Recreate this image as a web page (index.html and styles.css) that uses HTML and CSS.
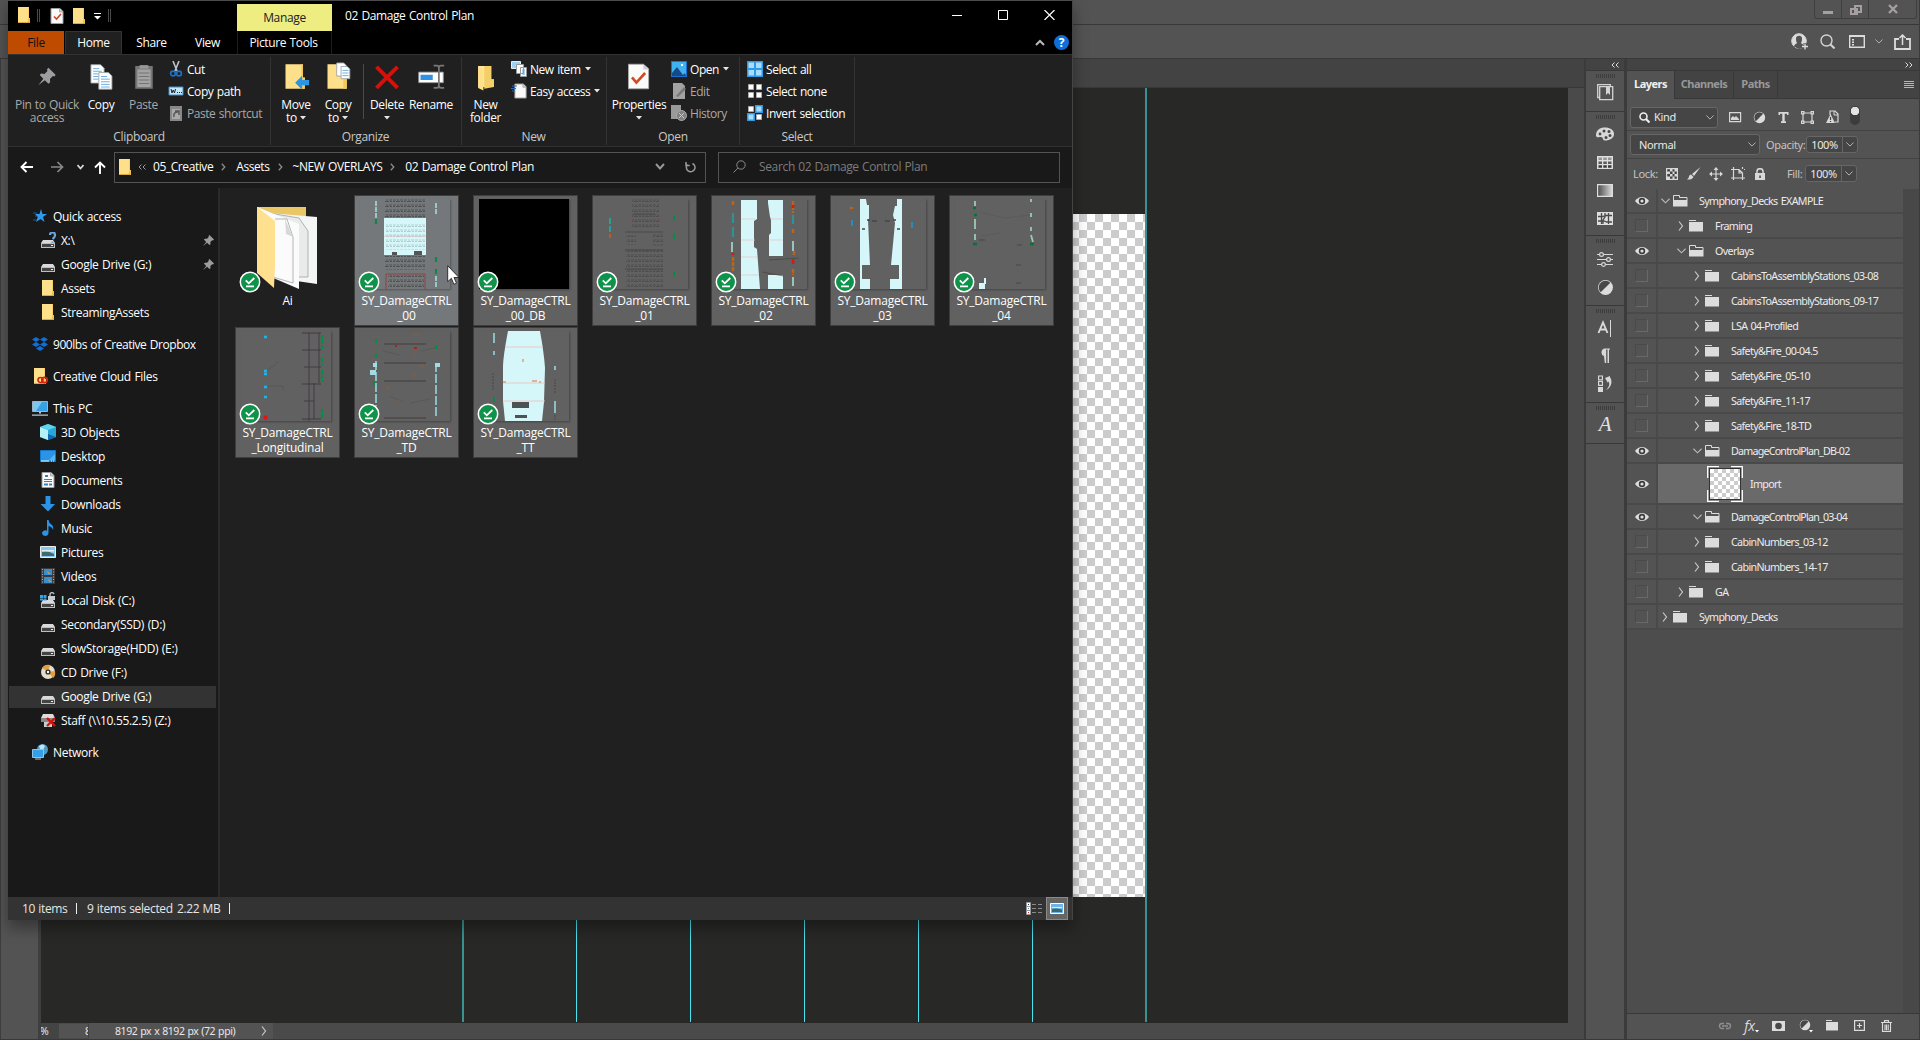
FILE: index.html
```html
<!DOCTYPE html>
<html lang="en">
<head>
<meta charset="utf-8">
<title>02 Damage Control Plan</title>
<link rel="stylesheet" href="styles.css">
</head>
<body>
<svg class="defs" width="0" height="0">
  <symbol id="folder" viewBox="0 0 16 16"><path d="M2 0h11v11h1v4.500H2z" fill="#ffe08a"/><path d="M2 15h12v1H2z" fill="#dca93c"/><path d="M12.500 0v11l-1 4H14V11h-1V0z" fill="#f0c04c"/></symbol>
  <symbol id="drive" viewBox="0 0 16 16"><path d="M3 7h10l2 3H1z" fill="#d9d9d9"/><path d="M1 10h14v5H1z" fill="#bdbdbd"/><path d="M2 11h12v3H2z" fill="#444"/><path d="M11 12h2v1h-2z" fill="#eee"/></symbol>
  <symbol id="pin" viewBox="0 0 12 12"><path d="M7 0l5 5-1 1-1-.3-2 2 .2 2.300L7 11 4.500 8.500 0 12l3.500-4.500L1 5l1-1 2.300.2 2-2L6 1z" fill="#9b9da0"/></symbol>
  <symbol id="doc" viewBox="0 0 16 16"><path d="M2 .5h9l3 3v12H2z" fill="#fafafa" stroke="#9c9c9c"/><path d="M10.500 0v4H14" fill="#ccc" stroke="#999" stroke-width=".7"/></symbol>
  <symbol id="badge" viewBox="0 0 22 22"><circle cx="11" cy="11" r="9.700" fill="#0f934b" stroke="#fff" stroke-width="1.500"/><path d="M6.800 9.300l3 3L15.300 7M7 15.300h8" fill="none" stroke="#fff" stroke-width="1.800"/></symbol>
  <symbol id="down" viewBox="0 0 6 4"><path d="M0 0h6L3 3.500z" fill="#e6e6e6"/></symbol>
  <symbol id="closed" viewBox="0 0 15 12"><path d="M0 0h7v1H0zM0 2h14v9.500H0z" fill="#dcdcdc"/></symbol>
  <symbol id="open" viewBox="0 0 15 12"><path d="M.5 5V.5h6v2h7.500V5" fill="none" stroke="#dcdcdc"/><path d="M0 5h14.500v6.500H0z" fill="#dcdcdc"/></symbol>
  <symbol id="eye" viewBox="0 0 14 10"><path d="M0 5Q3 1 7 1t7 4q-3 4-7 4T0 5z" fill="#dedede"/><circle cx="7" cy="5" r="3.200" fill="#3a3a3a"/><circle cx="7" cy="5" r="1.600" fill="#dedede"/></symbol>
  <symbol id="right" viewBox="0 0 6 10"><path d="M1 .5L4.500 5 1 9.500" fill="none" stroke="#c9c9c9" stroke-width="1.200"/></symbol>
  <symbol id="vee" viewBox="0 0 10 6"><path d="M.5.5L5 5 9.500.5" fill="none" stroke="#b9b9b9" stroke-width="1.200"/></symbol>
  <symbol id="half" viewBox="0 0 16 16"><circle cx="8" cy="8" r="7" fill="#dcdcdc"/><path d="M3.500 12.500A6.300 6.300 0 0 1 12.500 3.500z" fill="#484848"/></symbol>
  <symbol id="crumb" viewBox="0 0 5 8"><path d="M.8.8L3.800 4 .8 7.200" fill="none" stroke="#8d8d8d" stroke-width="1.300"/></symbol>
  <pattern id="ink" width="11" height="5" patternUnits="userSpaceOnUse"><path d="M0 1h3M4 1h2M7 1h3M0 2.500h2M3 2.500h4M8 2.500h2" stroke="#3b3b3b" stroke-width=".9" opacity=".7"/></pattern>
</svg>

<div class="app">
  <header class="app-title">
    <div class="win-buttons">
      <span class="wb"><svg width="10" height="14"><path d="M0 11h10v3H0z" fill="#a59f9f"/></svg></span>
      <span class="wb"><svg width="13" height="16"><path d="M6 6h6v6H6zM2 9h6v5H2z" fill="#535353" stroke="#a59f9f" stroke-width="2"/></svg></span>
      <span class="wb wide"><svg width="10" height="14"><path d="M1 5l8 8M9 5l-8 8" stroke="#a59f9f" stroke-width="2.400"/></svg></span>
    </div>
  </header>
  <div class="options">
    <svg width="17" height="17" viewBox="0 0 17 17"><circle cx="8" cy="8" r="7.300" fill="none" stroke="#dcdcdc"/><path d="M3 13.500q0-2.500 3-3.300Q4.500 8 5 5t3-3 3 3-1 5.200q2 .3 2 1.800v3l-4 1z" fill="#535353"/><path d="M8 1a7 7 0 0 0-5 12q1-2 3-2.800Q4.800 8 5 5.500T8 2.800t3 2.700-1 4.700q2 .6 3 2.800A7 7 0 0 0 8 1z" fill="#dcdcdc"/><path d="M14 10v7M10.500 13.500h7" stroke="#535353" stroke-width="3"/><path d="M14 10.500v6M11 13.500h6" stroke="#ddd" stroke-width="1.300"/></svg>
    <svg class="o-search" width="15" height="15"><circle cx="6.500" cy="6.500" r="5.500" fill="none" stroke="#d4d4d4" stroke-width="1.400"/><path d="M10.500 10.500l4 4" stroke="#d4d4d4" stroke-width="2"/></svg>
    <svg class="o-work" width="16" height="13"><path d="M.7 1h14.600v11.300H.7z" fill="none" stroke="#dcdcdc" stroke-width="1.400"/><path d="M0 0h16v2H0z" fill="#dcdcdc"/><path d="M3 4h2v1.500H3zM3 6.500h2V8H3zM3 9h2v1.500H3z" fill="#dcdcdc"/></svg>
    <svg class="o-vee" width="8" height="5"><use href="#vee"/></svg>
    <svg class="o-share" width="17" height="16"><path d="M5 5H1v10h15V5h-4" fill="none" stroke="#dcdcdc" stroke-width="1.800"/><path d="M8.500 11V1.500M5.500 4l3-3 3 3" fill="none" stroke="#dcdcdc" stroke-width="1.500"/></svg>
  </div>
  <main class="work">
    <aside class="tools"></aside>
    <section class="document">
      <div class="doc-tabs"></div>
      <div class="doc-body">
        <div class="viewport">
          <div class="artboard"></div>
          <i class="guide thick g1"></i><i class="guide g2"></i><i class="guide g3"></i><i class="guide g4"></i><i class="guide g5"></i><i class="guide g6"></i><i class="guide thick g7"></i>
        </div>
        <div class="scroll"></div>
      </div>
      <footer class="doc-status"><span class="pct">%</span><span class="eight">8</span><span class="dims">8192 px x 8192 px (72 ppi)</span><svg class="more" width="6" height="11"><use href="#right"/></svg></footer>
    </section>
    <aside class="dock">
      <div class="dock-top"><span class="laquo"><svg width="8" height="6"><path d="M3.500.5L1 3l2.500 2.500M7.500.5L5 3l2.500 2.500" fill="none" stroke="#ddd"/></svg></span></div>
      <div class="dgroup h1"><i class="grip"></i>
        <svg width="17" height="17"><path d="M3 13.500H.7V.7h12.600V3M2.700 2.700h13v13h-13z" fill="none" stroke="#d4d4d4" stroke-width="1.300"/><path d="M9 3h4v8l-2-2-2 2z" fill="#d4d4d4"/></svg></div>
      <div class="dgroup h2"><i class="grip"></i>
        <svg width="18" height="14"><path d="M9 .5C14 .5 18 3 18 7s-4 6.500-9 6.500c-3 0-1-3-4-3.500C3 10 0 11 0 8.500 0 3 4 .5 9 .5z" fill="#d8d8d8"/><g fill="#494949"><circle cx="4" cy="7" r="1.400"/><circle cx="8" cy="4" r="1.500"/><circle cx="13" cy="4.500" r="1.500"/><circle cx="14" cy="8.500" r="1.500"/><circle cx="10" cy="10.500" r="1.500"/></g></svg>
        <svg width="16" height="13"><path d="M0 0h16v13H0z" fill="#dedede"/><path d="M1.500 1.500h3.500v2.500H1.500zM6.300 1.500h3.500v2.500H6.300zM11 1.500h3.500v2.500H11z" fill="#959595"/><path d="M1.500 5.500h3.500V8H1.500zM6.300 5.500h3.500V8H6.300zM11 5.500h3.500V8H11z" fill="#5b5b5b"/><path d="M1.500 9.300h3.500v2.400H1.500zM6.300 9.300h3.500v2.400H6.300zM11 9.300h3.500v2.400H11z" fill="#383838"/></svg>
        <svg width="16" height="13"><defs><linearGradient id="gr"><stop offset="0" stop-color="#4a4a4a"/><stop offset="1" stop-color="#ddd"/></linearGradient></defs><path d="M.6.6h14.800v11.800H.6z" fill="url(#gr)" stroke="#dedede" stroke-width="1.200"/></svg>
        <svg width="16" height="13"><path d="M0 0h16v13H0z" fill="#dedede"/><path d="M4.500 1v11M8 1v4l-2 3v4M11.500 1v11M1 4.500h5l2-1h7M1 9h6l3 1h5" fill="none" stroke="#494949" stroke-width="1.300"/></svg></div>
      <div class="dgroup h3"><i class="grip"></i>
        <svg width="16" height="15"><path d="M0 2.500h16M0 7.500h16M0 12.500h16" stroke="#d8d8d8" stroke-width="1.200"/><g fill="#535353" stroke="#d8d8d8" stroke-width="1.200"><circle cx="4.500" cy="2.500" r="1.900"/><circle cx="11.500" cy="7.500" r="1.900"/><circle cx="6.500" cy="12.500" r="1.900"/></g></svg>
        <svg width="17" height="17"><use href="#half"/></svg></div>
      <div class="dgroup h4"><i class="grip"></i>
        <svg width="16" height="17"><path d="M1.500 13L6 2.500 10.500 13M3 9.500h6" fill="none" stroke="#dadada" stroke-width="1.900"/><path d="M13.500 0v17" stroke="#dadada"/></svg>
        <svg width="14" height="16"><path d="M6 8a4 4 0 0 1 0-7.500h6v1h-1V15H9.500V1.500h-1.300V15H6.800z" fill="#d8d8d8"/></svg>
        <svg width="16" height="17"><path d="M1.600 1h3.800v3.800H1.600zM1.600 6.500h3.800v3.800H1.600z" fill="none" stroke="#d8d8d8" stroke-width="1.200"/><path d="M1 12h5v5H1zM8 3l5-2v1.500C15 4 16 12 9 15c5-5 3-8 2-8.500V8z" fill="#d8d8d8"/></svg></div>
      <div class="dgroup h5"><i class="grip"></i><span class="glyph">A</span></div>
      <div class="dgroup rest"></div>
    </aside>
    <aside class="panel">
      <div class="panel-top"><svg width="8" height="6"><path d="M.5.5L3 3 .5 5.500M4.500.5L7 3 4.500 5.500" fill="none" stroke="#ddd"/></svg></div>
      <nav class="ptabs"><span class="on">Layers</span><span>Channels</span><span>Paths</span><i class="burger"></i></nav>
      <div class="prow filter">
        <div class="select kind"><svg width="11" height="11"><circle cx="4.500" cy="4.500" r="3.500" fill="none" stroke="#eee" stroke-width="1.600"/><path d="M7 7l3.500 3.500" stroke="#eee" stroke-width="2.200"/></svg><span>Kind</span><svg class="v" width="8" height="5"><use href="#vee"/></svg></div>
        <svg width="13" height="11"><path d="M.6.6h11v9H.6z" fill="none" stroke="#d8d8d8" stroke-width="1.200"/><path d="M2 8V6l2-2 1.500 1.500L7 4l3 3v1z" fill="#d8d8d8"/></svg>
        <svg width="13" height="13"><use href="#half"/></svg>
        <svg width="11" height="11"><path d="M.5 0h10v3H9V1.700H6.700v7.600H8V11H3V9.300h1.300V1.700H2V3H.5z" fill="#d8d8d8"/></svg>
        <svg width="13" height="13"><path d="M2 2h9v9H2z" fill="none" stroke="#d8d8d8" stroke-width="1.200"/><path d="M0 0h3.500v3.500H0zM9.500 0H13v3.500H9.500zM0 9.500h3.500V13H0zM9.500 9.500H13V13H9.500z" fill="#d8d8d8"/><path d="M1.200 1.200h1v1h-1zM10.700 1.200h1v1h-1zM1.200 10.700h1v1h-1zM10.700 10.700h1v1h-1z" fill="#444"/></svg>
        <svg width="13" height="14"><path d="M4 5V1h5l3 3v8H9" fill="none" stroke="#d8d8d8" stroke-width="1.200"/><path d="M8 1v4h4" fill="none" stroke="#d8d8d8"/><path d="M4.500 4L9 13H0z" fill="#d8d8d8"/><path d="M4.500 7v3M4.500 11v1" stroke="#444" stroke-width="1.200"/></svg>
        <i class="toggle"></i>
      </div>
      <div class="prow blend"><div class="select mode"><span>Normal</span><svg class="v" width="8" height="5"><use href="#vee"/></svg></div><span class="lab">Opacity:</span><div class="num"><b>100%</b><i><svg width="8" height="5"><use href="#vee"/></svg></i></div></div>
      <div class="prow lock"><span class="lab">Lock:</span>
        <svg class="l1" width="12" height="12"><path d="M.6.6h10.800v10.800H.6z" fill="#444" stroke="#d8d8d8" stroke-width="1.200"/><path d="M4 1h2.500v2.500H4zM8.500 1H11v2.500H8.500zM1 3.500h3V6H1zM6.500 3.500h2V6h-2zM4 6h2.500v2.500H4zM8.500 6H11v2.500H8.500zM1 8.500h3V11H1zM6.500 8.500h2V11h-2z" fill="#d8d8d8"/></svg>
        <svg width="14" height="13"><path d="M13.500 0L7 9 5 7zM4 7.500L6.500 10Q5 13 0 12.500 2 11 2 9.500T4 7.500z" fill="#d8d8d8"/></svg>
        <svg width="14" height="14"><path d="M7 1v12M1 7h12" stroke="#d8d8d8" stroke-width="1.200"/><path d="M7 0l2.500 3h-5zM7 14l2.500-3h-5zM0 7l3-2.500v5zM14 7l-3-2.500v5z" fill="#d8d8d8"/></svg>
        <svg width="14" height="13"><path d="M2.500 0v13M0 2.500h8l3.500 3.500v7M0 11h14M8 3v3h3M11.500 0v2M13 2.500h1" fill="none" stroke="#d8d8d8" stroke-width="1.200"/></svg>
        <svg class="l5" width="10" height="12"><path d="M0 5h10v7H0z" fill="#d8d8d8"/><path d="M2 5V3.500a3 2.800 0 0 1 6 0V5" fill="none" stroke="#d8d8d8" stroke-width="1.500"/><path d="M4.300 7.500h1.500V10H4.300z" fill="#444"/></svg>
        <span class="lab fill">Fill:</span><div class="num"><b>100%</b><i><svg width="8" height="5"><use href="#vee"/></svg></i></div></div>
      <div class="list">
        <div class="layer"><span class="vis"><svg><use href="#eye"/></svg></span><svg class="tv"><use href="#vee"/></svg><svg class="fo"><use href="#open"/></svg><span>Symphony_Decks EXAMPLE</span></div>
        <div class="layer d1"><span class="vis"><i></i></span><svg class="tr"><use href="#right"/></svg><svg class="fo"><use href="#closed"/></svg><span>Framing</span></div>
        <div class="layer d1"><span class="vis"><svg><use href="#eye"/></svg></span><svg class="tv"><use href="#vee"/></svg><svg class="fo"><use href="#open"/></svg><span>Overlays</span></div>
        <div class="layer d2"><span class="vis"><i></i></span><svg class="tr"><use href="#right"/></svg><svg class="fo"><use href="#closed"/></svg><span>CabinsToAssemblyStations_03-08</span></div>
        <div class="layer d2"><span class="vis"><i></i></span><svg class="tr"><use href="#right"/></svg><svg class="fo"><use href="#closed"/></svg><span>CabinsToAssemblyStations_09-17</span></div>
        <div class="layer d2"><span class="vis"><i></i></span><svg class="tr"><use href="#right"/></svg><svg class="fo"><use href="#closed"/></svg><span>LSA 04-Profiled</span></div>
        <div class="layer d2"><span class="vis"><i></i></span><svg class="tr"><use href="#right"/></svg><svg class="fo"><use href="#closed"/></svg><span>Safety&amp;Fire_00-04.5</span></div>
        <div class="layer d2"><span class="vis"><i></i></span><svg class="tr"><use href="#right"/></svg><svg class="fo"><use href="#closed"/></svg><span>Safety&amp;Fire_05-10</span></div>
        <div class="layer d2"><span class="vis"><i></i></span><svg class="tr"><use href="#right"/></svg><svg class="fo"><use href="#closed"/></svg><span>Safety&amp;Fire_11-17</span></div>
        <div class="layer d2"><span class="vis"><i></i></span><svg class="tr"><use href="#right"/></svg><svg class="fo"><use href="#closed"/></svg><span>Safety&amp;Fire_18-TD</span></div>
        <div class="layer d2 tight"><span class="vis"><svg><use href="#eye"/></svg></span><svg class="tv"><use href="#vee"/></svg><svg class="fo"><use href="#open"/></svg><span>DamageControlPlan_DB-02</span></div>
        <div class="layer sel"><span class="vis"><svg><use href="#eye"/></svg></span><div class="lthumb"><i></i><svg width="36" height="36"><path d="M.7 12V.7H12M24 .7h11.300V12M35.300 24v11.300H24M12 35.300H.7V24" fill="none" stroke="#fff" stroke-width="1.300"/></svg></div><span>Import</span></div>
        <div class="layer d2 tight"><span class="vis"><svg><use href="#eye"/></svg></span><svg class="tv"><use href="#vee"/></svg><svg class="fo"><use href="#open"/></svg><span>DamageControlPlan_03-04</span></div>
        <div class="layer d2"><span class="vis"><i></i></span><svg class="tr"><use href="#right"/></svg><svg class="fo"><use href="#closed"/></svg><span>CabinNumbers_03-12</span></div>
        <div class="layer d2"><span class="vis"><i></i></span><svg class="tr"><use href="#right"/></svg><svg class="fo"><use href="#closed"/></svg><span>CabinNumbers_14-17</span></div>
        <div class="layer d1"><span class="vis"><i></i></span><svg class="tr"><use href="#right"/></svg><svg class="fo"><use href="#closed"/></svg><span>GA</span></div>
        <div class="layer"><span class="vis"><i></i></span><svg class="tr"><use href="#right"/></svg><svg class="fo"><use href="#closed"/></svg><span>Symphony_Decks</span></div>
      </div>
      <footer class="pfoot">
        <svg width="14" height="8"><path d="M6 1.500H4a2.500 2.500 0 0 0 0 5h2M8 1.500h2a2.500 2.500 0 0 1 0 5H8M4 4h6" fill="none" stroke="#8e8e8e" stroke-width="1.400"/></svg>
        <span class="fx">fx<svg width="4" height="3"><path d="M0 0h4L2 2.500z" fill="#fff"/></svg></span>
        <svg width="13" height="10"><path d="M0 0h13v10H0z" fill="#dcdcdc"/><circle cx="6.500" cy="5" r="3.300" fill="#484848"/></svg>
        <svg width="14" height="14"><use href="#half" width="12" height="12"/><path d="M10 11h4l-2 2.500z" fill="#fff"/></svg>
        <svg width="13" height="11"><path d="M0 0h6v1H0zM0 2h12v8.500H0z" fill="#dcdcdc"/></svg>
        <svg width="11" height="11"><path d="M.6.6h9.800v9.800H.6zM5.500 3v5M3 5.500h5" fill="none" stroke="#dcdcdc" stroke-width="1.200"/></svg>
        <svg width="11" height="12"><path d="M0 2.500h11M3.500 2V.6h4V2M1.500 3v8.400h8V3M4 4.500v5.500M5.500 4.500v5.500M7.200 4.500v5.500" fill="none" stroke="#dcdcdc" stroke-width="1.100"/></svg>
      </footer>
    </aside>
  </main>
</div>

<div class="explorer">
  <header class="x-title">
    <svg class="q1" width="15" height="16"><use href="#folder" x="-1" width="16" height="16"/></svg><i class="qsep"></i>
    <svg class="q2" width="16" height="17"><use href="#doc" width="16" height="16"/><path d="M5 8.500l2.500 2.500L12 6" fill="none" stroke="#d2451e" stroke-width="1.600"/></svg>
    <svg class="q3" width="15" height="16"><use href="#folder" x="-1" width="16" height="16"/></svg>
    <svg class="q4" width="7" height="7"><path d="M0 0h7v1H0zM0 3h7L3.500 6.500z" fill="#fff"/></svg><i class="qsep"></i>
    <div class="manage">Manage</div><div class="x-name">02 Damage Control Plan</div>
    <div class="x-ctl"><svg width="10" height="10"><path d="M0 5.500h10" stroke="#fff"/></svg><svg width="10" height="10"><path d="M.5.5h9v9h-9z" fill="none" stroke="#fff"/></svg><svg width="11" height="10"><path d="M.5 0l10 10M10.500 0L.5 10" stroke="#fff" stroke-width="1.200"/></svg></div>
  </header>
  <nav class="x-tabs"><span class="file">File</span><span class="home">Home</span><span class="share">Share</span><span class="view">View</span><span class="pict">Picture Tools</span><div class="x-help"><svg width="10" height="7"><path d="M1 6l4-4 4 4" fill="none" stroke="#bbb" stroke-width="2"/></svg><b>?</b></div></nav>
  <section class="ribbon">
    <div class="grp clip"><div class="gb">
      <div class="big dim w66"><svg class="i32" viewBox="0 0 32 32"><use href="#pin" x="6" y="6" width="20" height="20"/></svg><span>Pin to Quick<br>access</span></div>
      <div class="big w42"><svg class="i32" viewBox="0 0 32 32"><g fill="#fff" stroke="#9aa3a8"><path d="M4.500 2.500h11l4 4v17h-15z"/><path d="M13.500 11.500h11l4 4v15h-15z"/></g><path d="M7 7h7M7 10h10M7 13h6M7 16h6M7 19h6M16 16h7M16 19h10M16 22h10M16 25h10M16 28h10" stroke="#5ba4dc"/></svg><span>Copy</span></div>
      <div class="big dim w43"><svg class="i32" viewBox="0 0 32 32"><path d="M6 4h20v26H6z" fill="#777"/><path d="M8.500 8h15v20h-15z" fill="#a4a4a4"/><path d="M11 3h10v4H11z" fill="#999"/><path d="M10 12h12M10 16h12M10 20h12M10 24h12" stroke="#6b6b6b"/></svg><span>Paste</span></div>
      <div class="small s1">
        <div><svg viewBox="0 0 16 16"><path d="M5 0l4 10M11 0L7 10" stroke="#b8c4cf" stroke-width="1.600"/><circle cx="5" cy="12.500" r="2.400" fill="none" stroke="#1f6fc4" stroke-width="1.700"/><circle cx="11" cy="12.500" r="2.400" fill="none" stroke="#1f6fc4" stroke-width="1.700"/></svg>Cut</div>
        <div><svg viewBox="0 0 16 16"><path d="M1 4h14v8H1z" fill="#c5e7f8" stroke="#3f8fc2"/><path d="M3 6l1 4 1.200-3L6.500 10l1-4M9 9.500h1M11 9.500h1M13 9.500h1" fill="none" stroke="#222"/></svg>Copy path</div>
        <div class="dim"><svg viewBox="0 0 16 16"><path d="M2 1h12v15H2z" fill="#888"/><path d="M4 4h8v10H4z" fill="#aaa"/><path d="M6 12q-1-5 4-5M7 6h4v4" fill="none" stroke="#555" stroke-width="1.500"/></svg>Paste shortcut</div>
      </div></div><p>Clipboard</p></div>
    <div class="grp orga"><div class="gb">
      <div class="big w42"><svg class="i32" viewBox="0 0 32 32"><path d="M4 2h20v15h2v13H4z" fill="#ffe08a"/><path d="M22 2h2v15h2v13h-4z" fill="#f3c95c"/><path d="M31 20h-8v-5l-8 8 8 8v-5h8z" fill="#2c94e4"/></svg><span>Move<br>to <svg class="dn"><use href="#down"/></svg></span></div>
      <div class="big w42"><svg class="i32" viewBox="0 0 32 32"><path d="M4 2h20v15h2v13H4z" fill="#ffe08a"/><path d="M22 16h4v14h-4z" fill="#f3c95c"/><g fill="#fff" stroke="#9aa3a8"><path d="M14.500.5h8l3 3v12h-11z"/><path d="M19.500 4.500h7l3 3v11h-10z"/></g><path d="M21 9h7M21 12h7M21 15h7" stroke="#5ba4dc"/></svg><span>Copy<br>to <svg class="dn"><use href="#down"/></svg></span></div>
      <i class="vr"></i>
      <div class="big w46"><svg class="i32" viewBox="0 0 32 32"><path d="M4 5l24 24M28 5L4 29" stroke="#d8100c" stroke-width="4.400"/></svg><span>Delete<br><svg class="dn"><use href="#down"/></svg></span></div>
      <div class="big w42"><svg class="i32" viewBox="0 0 32 32"><path d="M2 11h28v12H2z" fill="#fff" stroke="#999"/><path d="M4 14h14v6H4z" fill="#2f92e2"/><path d="M19 3.500h3.500q2.500 0 2.500 2.500v20q0 3-2.500 3H19M31 3.500h-3.500Q25 3.500 25 6M31 29h-3.500Q25 29 25 26" fill="none" stroke="#777" stroke-width="2"/></svg><span>Rename</span></div>
    </div><p>Organize</p></div>
    <div class="grp newg"><div class="gb">
      <div class="big w39"><svg class="i32" viewBox="0 0 32 32"><path d="M7 4h15v15h3v9H7z" fill="#ffe79c"/><path d="M14 4h8v15h3v9l-11 2z" fill="#f4cf68"/><path d="M7 4l6 3v25l-6-3z" fill="#ffe08a"/></svg><span>New<br>folder</span></div>
      <div class="small s2">
        <div><svg viewBox="0 0 16 16"><path d="M.5.5h9v7h-9z" fill="#9cd3f3" stroke="#eee"/><path d="M5.500 3.500h7v9h-7zM9.500 6.500h6v9h-6z" fill="#fff" stroke="#999"/><path d="M11 9h3M11 11h3M11 13h3" stroke="#5ba4dc"/></svg>New item<svg class="dn"><use href="#down"/></svg></div>
        <div><svg viewBox="0 0 16 16"><use href="#doc" x="2" width="15" height="16"/><path d="M1 3h5M0 5.500h5M1 8h3" stroke="#2b6cc0"/></svg>Easy access<svg class="dn"><use href="#down"/></svg></div>
      </div></div><p>New</p></div>
    <div class="grp open"><div class="gb">
      <div class="big w52"><svg class="i32" viewBox="0 0 32 32"><path d="M4 2h17l6 5v23H4z" fill="#fafafa" stroke="#aaa"/><path d="M21 2v6h6" fill="#ccc"/><path d="M8 17l5 6 10-11" fill="none" stroke="#cf4a20" stroke-width="3"/></svg><span>Properties<br><svg class="dn"><use href="#down"/></svg></span></div>
      <div class="small s3">
        <div><svg viewBox="0 0 16 16"><path d="M0 0h16v16H0z" fill="#1a6fd0"/><path d="M1 1h14v14H1z" fill="#41b2f0"/><path d="M1 12l5-6 6 8 2-2 1 3H1z" fill="#164a86"/><path d="M10 3h2v2h-2z" fill="#fff"/></svg>Open<svg class="dn"><use href="#down"/></svg></div>
        <div class="dim"><svg viewBox="0 0 16 16"><path d="M2 0h9l3 3v13H2z" fill="#a2a2a2"/><path d="M5 13l8-9 2 2-8 8z" fill="#777"/></svg>Edit</div>
        <div class="dim"><svg viewBox="0 0 16 16"><path d="M0 0h10v14H0z" fill="#999"/><circle cx="10.500" cy="10.500" r="5" fill="#808080" stroke="#aaa"/><path d="M8 8l5 5M13 8l-5 5" stroke="#ccc"/></svg>History</div>
      </div></div><p>Open</p></div>
    <div class="grp selg"><div class="gb">
      <div class="small s4">
        <div><svg viewBox="0 0 16 16"><path d="M0 0h16v16H0z" fill="#2e9be8"/><path d="M1.500 1.500h5.500V7H1.500zM9 1.500h5.500V7H9zM1.500 9h5.500v5.500H1.500zM9 9h5.500v5.500H9z" fill="#a9dcfa"/></svg>Select all</div>
        <div><svg viewBox="0 0 16 16"><path d="M1.500 1.500h5v5h-5zM9.500 1.500h5v5h-5zM1.500 9.500h5v5h-5zM9.500 9.500h5v5h-5z" fill="#fff" stroke="#aaa"/></svg>Select none</div>
        <div><svg viewBox="0 0 16 16"><path d="M1.500 1.500h5v5h-5zM9.500 9.500h5v5h-5z" fill="#fff" stroke="#aaa"/><path d="M8.700.7h6.500v6.500H8.700zM.7 8.700h6.500v6.500H.7z" fill="#a9dcfa" stroke="#2e9be8" stroke-width="1.500"/></svg>Invert selection</div>
      </div></div><p>Select</p></div>
  </section>
  <section class="addr">
    <svg class="a1" width="13" height="12"><path d="M13 6H1.500M6.500 1l-5 5 5 5" fill="none" stroke="#fff" stroke-width="1.900"/></svg>
    <svg class="a2" width="13" height="12"><path d="M0 6h11.500M6.500 1l5 5-5 5" fill="none" stroke="#8a8a8a" stroke-width="1.700"/></svg>
    <svg class="a3" width="7" height="6"><path d="M.5 1l3 3.500 3-3.500" fill="none" stroke="#ddd" stroke-width="1.700"/></svg>
    <svg class="a4" width="12" height="13"><path d="M6 13V1.500M1 6.500l5-5 5 5" fill="none" stroke="#fff" stroke-width="1.900"/></svg>
    <div class="path"><svg class="pf" width="15" height="16"><use href="#folder" x="-1" width="16" height="16"/></svg><svg class="ll" width="8" height="6"><path d="M3.500.5L1 3l2.500 2.500M7.500.5L5 3l2.500 2.500" fill="none" stroke="#999"/></svg><span class="c1">05_Creative</span><svg class="cr"><use href="#crumb"/></svg><span class="c2">Assets</span><svg class="cr"><use href="#crumb"/></svg><span class="c3">~NEW OVERLAYS</span><svg class="cr"><use href="#crumb"/></svg><span class="c4">02 Damage Control Plan</span>
      <svg class="pv" width="10" height="7"><path d="M1 1l4 4.500L9 1" fill="none" stroke="#999" stroke-width="1.900"/></svg><svg class="pr" width="11" height="12"><path d="M7.500 2.500A4.300 4.300 0 1 1 2.500 3.500M1 1v3.500h3.700" fill="none" stroke="#9a9a9a" stroke-width="1.500"/></svg></div>
    <div class="find"><svg width="13" height="13"><circle cx="8" cy="5" r="4.200" fill="none" stroke="#8a8a8a"/><path d="M5 8l-4.500 4.500" stroke="#8a8a8a"/></svg><span>Search 02 Damage Control Plan</span></div>
  </section>
  <div class="x-main">
    <aside class="side">
      <div class="it"><svg viewBox="0 0 16 16"><path d="M9 1l1.500 5H15l-4 3 1.500 5-4-3-4.500 3 1.800-5L3 6h4.500z" fill="#2d9cf0"/><path d="M1 5h4M3 8h2M1 12h4" stroke="#1c5a9a"/></svg>Quick access</div>
      <div class="it c"><svg viewBox="0 0 16 16"><use href="#drive" y="1"/><path d="M10 3q0-2.500 2.500-2.500T15 3t-2.500 4M12.500 9.500v1.500" fill="none" stroke="#6ea4d8" stroke-width="2.200"/></svg>X:\<svg class="pn"><use href="#pin"/></svg></div>
      <div class="it c"><svg viewBox="0 0 16 16"><use href="#drive" y="1"/></svg>Google Drive (G:)<svg class="pn"><use href="#pin"/></svg></div>
      <div class="it c"><svg viewBox="0 0 16 16"><use href="#folder"/></svg>Assets</div>
      <div class="it c"><svg viewBox="0 0 16 16"><use href="#folder"/></svg>StreamingAssets</div>
      <div class="it g long"><svg viewBox="0 0 16 16"><path d="M4 1l4 2.500L4 6 0 3.500zM12 1l4 2.500L12 6 8 3.500zM4 6l4 2.500L4 11 0 8.500zM12 6l4 2.500-4 2.500-4-2.500zM8 10l4 2.500L8 15l-4-2.500z" fill="#0f6fd8"/></svg>900lbs of Creative Dropbox</div>
      <div class="it g"><svg viewBox="0 0 16 16"><use href="#folder"/><circle cx="8.500" cy="12" r="2.500" fill="none" stroke="#d3230e" stroke-width="1.700"/><circle cx="12.500" cy="12" r="2.700" fill="none" stroke="#d3230e" stroke-width="1.700"/></svg>Creative Cloud Files</div>
      <div class="it g"><svg viewBox="0 0 16 16"><path d="M.5 1.500h15v10H.5z" fill="#38a0e4" stroke="#9fb4c4"/><path d="M1 2h9l-6 9H1z" fill="#7cc6f2"/><path d="M7 12h2v1.500H7zM0 14.500h16v1.200H0z" fill="#b8c4cc"/></svg>This PC</div>
      <div class="it c"><svg viewBox="0 0 16 16"><path d="M8 0l8 3v10l-8 3-8-3V3z" fill="#29a8d8"/><path d="M0 3l8 3v10l-8-3z" fill="#b4f0fa"/><path d="M8 0l8 3-8 3-8-3z" fill="#5fd4f0"/><path d="M8 10l8 3-8 3z" fill="#1169b4"/></svg>3D Objects</div>
      <div class="it c"><svg viewBox="0 0 16 16"><path d="M.5 2.500h15v11H.5z" fill="#2a94e6" stroke="#1378c8"/><path d="M9 12l6-6v6z" fill="#56b6f4"/><path d="M1 13h8M11 13h1M13 13h1" stroke="#dff"/></svg>Desktop</div>
      <div class="it c"><svg viewBox="0 0 16 16"><use href="#doc"/><path d="M5 3h3v2H5zM4 7h8v1H4zM4 9h8v1H4zM4 11.500h4v2H4zM9 11.500h3v2H9z" fill="#2c84c8"/></svg>Documents</div>
      <div class="it c"><svg viewBox="0 0 16 16"><path d="M5.500 0h5v8H15l-7 7.500L.5 8h5z" fill="#2b93e6"/></svg>Downloads</div>
      <div class="it c"><svg viewBox="0 0 16 16"><path d="M7 0h1.500q.5 3 3 4.500T13 10q-.5-3-4.500-4v7a3.200 2.800 0 1 1-1.500-2.300z" fill="#2b93e6"/></svg>Music</div>
      <div class="it c"><svg viewBox="0 0 16 16"><path d="M.5 2.500h15v11H.5z" fill="#8cc8ec" stroke="#eee"/><path d="M2 8q5-2 12 2v2H2z" fill="#3f6a6e"/><path d="M2 6h12v1.500H2z" fill="#dff0f8"/></svg>Pictures</div>
      <div class="it c"><svg viewBox="0 0 16 16"><path d="M1 0h14v16H1z" fill="#3a3a3a"/><path d="M4 1h8v6H4zM4 9h8v6H4z" fill="#3b8ecc"/><path d="M7 3l4 3H8zM8 11l4 3H9z" fill="#dc9038"/><path d="M2.500 1v14M13.500 1v14" stroke="#aaa" stroke-width="1.200" stroke-dasharray="1 1.500"/></svg>Videos</div>
      <div class="it c"><svg viewBox="0 0 16 16"><use href="#drive" y="1"/><path d="M0 3h3v3H0zM3.500 3h3v3h-3zM0 6.500h3v2H0zM3.500 6.500h3v2h-3z" fill="#2fa4ea"/><path d="M8 4h7v4H8z" fill="#c4ccd2"/><path d="M10 4V2q2-3 4 0" fill="none" stroke="#bbb" stroke-width="1.400"/></svg>Local Disk (C:)</div>
      <div class="it c"><svg viewBox="0 0 16 16"><use href="#drive" y="1"/></svg>Secondary(SSD) (D:)</div>
      <div class="it c"><svg viewBox="0 0 16 16"><use href="#drive" y="1"/></svg>SlowStorage(HDD) (E:)</div>
      <div class="it c"><svg viewBox="0 0 16 16"><circle cx="8" cy="8" r="7" fill="#e6dccb"/><path d="M8 8L2 4q3-4 8-3zM8 8l5 6q3-2 2-7z" fill="#e0a040"/><circle cx="8" cy="8" r="2.600" fill="#2a2a2a"/><circle cx="8" cy="8" r="1.200" fill="#fff"/></svg>CD Drive (F:)</div>
      <div class="it c cur"><svg viewBox="0 0 16 16"><use href="#drive" y="1"/></svg>Google Drive (G:)</div>
      <div class="it c"><svg viewBox="0 0 16 16"><path d="M3 2h10l2 4H1z" fill="#ddd"/><path d="M1 6h14v4H1z" fill="#888"/><path d="M4 10h8v5H4z" fill="#ccc"/><path d="M7 6l8 8M15 6l-8 8" stroke="#d8100c" stroke-width="2.400"/></svg>Staff (\\10.55.2.5) (Z:)</div>
      <div class="it g"><svg viewBox="0 0 16 16"><circle cx="10.500" cy="5.500" r="5.500" fill="#4d9cc4"/><path d="M7 2q4-3 6 0l-2 4-3-1z" fill="#bfe4f2"/><path d="M.5 5.500h11v8H.5z" fill="#35a0ea" stroke="#8cc4ea"/><path d="M3 15h6" stroke="#bbb"/></svg>Network</div>
    </aside>
    <section class="files">
      <div class="tile plain"><div class="th"><svg viewBox="0 0 90 90"><path d="M16 8h49v52H16z" fill="#e9c767"/><path d="M28 14l48 4v67L28 78z" fill="#f4f5f5"/><path d="M28 14l30 5 9 13v46H28z" fill="#e9ebeb" stroke="#888" stroke-width=".6"/><path d="M16 8l42 17v65L30 78z" fill="#fbfbfb"/><path d="M34 20h12l6 18v46l-20-6" fill="none" stroke="#888" stroke-width=".6"/><path d="M44 20l8 18-7-3z" fill="#d7d9d9"/><path d="M16 8l18 14v44l-1 23-17-15z" fill="#ffe08f"/></svg></div><svg class="bd"><use href="#badge"/></svg><p>Ai</p></div>
      <div class="tile hot"><div class="th"><svg viewBox="0 0 90 90"><path fill="url(#ink)" d="M25 0h41v18H25zM25 57h41v14H25zM28 76h36v13H28z"/><path d="M24 19h42v37H24z" fill="#d5f7fa"/><path fill="url(#ink)" opacity=".35" d="M26 23h39v28H26z"/><path d="M24 37h42" stroke="#efb9bd" stroke-width=".8"/><path d="M32 53h5v3h-5zM54 52h8v4h-8z" fill="#555"/><path d="M26 90V75h39v15" fill="none" stroke="#8b4545"/><path d="M16 2v17M76 4v11M76 77v12" stroke="#a2dbdc" stroke-width="1.600" stroke-dasharray="5 1"/><path d="M16 20v5M76 58v5M76 70v5" stroke="#078b45" stroke-width="2.200"/></svg></div><svg class="bd"><use href="#badge"/></svg><p>SY_DamageCTRL<br>_00</p></div>
      <div class="tile"><div class="th black"></div><svg class="bd"><use href="#badge"/></svg><p>SY_DamageCTRL<br>_00_DB</p></div>
      <div class="tile"><div class="th"><svg viewBox="0 0 90 90"><path fill="url(#ink)" opacity=".8" d="M34 0h27v30H34zM28 36h10v10H28zM54 35h12v12H54zM28 50h38v40H28z"/><path d="M27 33h38M27 51h38M27 70h38M35 15h22" stroke="#444" stroke-width=".8"/><path d="M12 19v15" stroke="#2a9f98" stroke-width="2" stroke-dasharray="6 2"/><path d="M12 35v4" stroke="#b85d21" stroke-width="2"/><path d="M76 17v4M76 35v5M76 73v4" stroke="#078b45" stroke-width="2"/><path d="M34 22h2M61 21h2" stroke="#b33"/></svg></div><svg class="bd"><use href="#badge"/></svg><p>SY_DamageCTRL<br>_01</p></div>
      <div class="tile"><div class="th"><svg viewBox="0 0 90 90"><path d="M24 1h16v19l-3 2v26l3 2 3 40H24zM51 1h15v56H52V36l2-2V20l-1-2-2-14zM51 76h15v14H51z" fill="#d5f7fa"/><path d="M24 20h14M53 20h13M24 41h14M53 41h13M24 58h16M24 76h18" stroke="#f1bcbc" stroke-width=".7"/><path d="M16 2v4M16 58v15M76 2v12M76 30v5M77 52v5M76 70v6" stroke="#bd6416" stroke-width="2.400" stroke-dasharray="4 1"/><path d="M16 14v26M76 16v9" stroke="#2c9294" stroke-width="2.200" stroke-dasharray="10 4"/><path d="M15 43v10M76 42v10M76 78v9" stroke="#9bc4b9" stroke-width="2"/><path d="M16 54v2M76 60v5M76 6v3" stroke="#e01616" stroke-width="2.600"/><path d="M45 73l22 4M52 61l30-2" stroke="#454545" stroke-width=".7"/></svg></div><svg class="bd"><use href="#badge"/></svg><p>SY_DamageCTRL<br>_02</p></div>
      <div class="tile"><div class="th"><svg viewBox="0 0 90 90"><path d="M24 0h6l1 6h2v14h-1l2 46h-8v14h8v10H24zM61 0h5v90H54V80h9V66h-8l4-42-2-8 2-9h2z" fill="#d5f7fa"/><path d="M31 21h3M57 21h3M26 30h3M61 30h3M36 22h5M49 22h5" stroke="#454545" stroke-width="1.500"/><path d="M16 21v6M76 23v6" stroke="#2491c9" stroke-width="1.800"/><path d="M14 9h3" stroke="#ba641c" stroke-width="2"/></svg></div><svg class="bd"><use href="#badge"/></svg><p>SY_DamageCTRL<br>_03</p></div>
      <div class="tile"><div class="th"><svg viewBox="0 0 90 90"><path d="M20 2v5M20 20v10M20 35v6M76 0v3M76 14v4M76 28v4M76 36l2 7" stroke="#9bc9b9" stroke-width="1.800"/><path d="M18 9h3M19 16h3M18 45h4M75 45h4" stroke="#08713a" stroke-width="2.400"/><path d="M24 84h6v6h-6zM29 79h2v6h-2z" fill="#d5f7fa"/><path d="M24 41h6M62 46h5M61 66h5M61 84h5" stroke="#484848"/><path d="M25 13l25 6 25-3M25 37l20-3" stroke="#585858" stroke-width=".6" fill="none"/></svg></div><svg class="bd"><use href="#badge"/></svg><p>SY_DamageCTRL<br>_04</p></div>
      <div class="tile"><div class="th"><svg viewBox="0 0 90 90"><path d="M68 2v88M78 2v50M73 52v36M61 2h19M61 19h19M63 36h17M61 53h19M63 70h10M61 88h19" stroke="#423b40" fill="none"/><path d="M81 4v14M81 27v8M81 39v12M81 78v9" stroke="#078b45" stroke-width="2.200" stroke-dasharray="4 1"/><path d="M23 6h3M23 40h3M23 43h3M23 56h3M23 66h3" stroke="#18b6e9" stroke-width="2.600"/><circle cx="24.500" cy="86.500" r="2.200" fill="#e01616"/><path d="M26 40l12-10M27 55h15v5" stroke="#505050" stroke-width=".6" fill="none"/></svg></div><svg class="bd"><use href="#badge"/></svg><p>SY_DamageCTRL<br>_Longitudinal</p></div>
      <div class="tile"><div class="th"><svg viewBox="0 0 90 90"><path d="M24 13h42M24 32h42M24 50h42M24 87h42" stroke="#443c3e" stroke-width="1.200"/><path d="M16 8v4M16 22v4M76 14v4M14 51v4" stroke="#078b45" stroke-width="2.200"/><path d="M16 30v45M76 32v54" stroke="#93cfd4" stroke-width="1.700" stroke-dasharray="9 2"/><path d="M10 39h6v5h-6zM13 32h4v4h-4zM75 32h5v4h-5z" fill="#a2dce2"/><path d="M35 15h2M54 17h3" stroke="#a22" stroke-width="2"/><path d="M54 4h4M54 24h2M60 35h4M54 42v5M28 55v4M37 68l4 3" stroke="#915d32" stroke-width="1.500" opacity=".7"/><path d="M23 20l17 4M29 65l15 6M61 20l14-3M50 72l20-4" stroke="#535353" stroke-width=".6"/></svg></div><svg class="bd"><use href="#badge"/></svg><p>SY_DamageCTRL<br>_TD</p></div>
      <div class="tile"><div class="th"><svg viewBox="0 0 90 90"><path d="M29 0h32q4 22 5 37l-1 34-2 19H26l-2-20V36q0-10 5-36z" fill="#d5f7fa"/><path d="M26 16h38M24 52h42M24 70h42" stroke="#edbcbc" stroke-width=".8"/><path d="M33 71h17v6H33zM36 84h12v3H36z" fill="#4b5253"/><path d="M15 2v10M15 20v4M76 35v4M76 70v12" stroke="#93cfd4" stroke-width="1.700"/><path d="M15 66v5" stroke="#078b45" stroke-width="2"/><path d="M24 51h3M53 50h5M60 51h2M44 28v3" stroke="#e0a070" stroke-width="1.500"/><path d="M14 42v18M76 48v15M76 84v6" stroke="#484848" stroke-dasharray="2 1"/></svg></div><svg class="bd"><use href="#badge"/></svg><p>SY_DamageCTRL<br>_TT</p></div>
    </section>
  </div>
  <footer class="x-status"><span class="s-a">10 items</span><i></i><span class="s-b">9 items selected</span><span class="s-c">2.22 MB</span><i></i>
    <svg class="vlist" width="17" height="14"><path d="M.5.5h4v4h-4zM.5 4.500h4v4h-4zM.5 8.500h4v4h-4z" fill="#fff" stroke="#999"/><path d="M2 2h1v1H2z" fill="#333"/><path d="M2 6h1v1H2z" fill="#38c"/><path d="M2 10h1v1H2z" fill="#c33"/><path d="M6 2.500h4M12 2.500h4M6 6.500h4M12 6.500h4M6 10.500h4M12 10.500h4" stroke="#8a8a8a"/></svg>
    <div class="vbig"><svg width="14" height="11"><path d="M.5.5h13v10H.5z" fill="#6db4ea" stroke="#fff"/><path d="M2 6l4-.5 6 1V9H2z" fill="#3e6b68"/><path d="M2 4h10v1H2z" fill="#d7edf8"/></svg></div></footer>
</div>
<svg class="cursor" width="14" height="21" viewBox="0 0 14 21"><path d="M.7.7v16l3.700-3.400 2.500 6 2.600-1.100-2.500-5.700h5z" fill="#fff" stroke="#222" stroke-width=".9"/></svg>
</body>
</html>
```
FILE: styles.css
```css
* { box-sizing: border-box; }
html, body { margin: 0; width: 1920px; height: 1040px; overflow: hidden; background: #535353; }
body { font: 12px/15px "Open Sans", "Noto Sans", sans-serif; position: relative; }
i { font-style: normal; }
p { margin: 0; }
svg { display: block; flex: none; }
.defs { position: absolute; }

/* Image editor */
.app { width: 1920px; height: 1040px; display: flex; flex-direction: column; background: #535353; color: #e8e8e8; font: 11px/14px "Noto Sans", "Open Sans", sans-serif; letter-spacing: -.35px; border-bottom: 1px solid #383838; border-right: 1px solid #3b3b3b; }
.app-title { height: 25px; border-bottom: 1px solid #383838; display: flex; justify-content: flex-end; padding-right: 2px; }
.win-buttons { display: flex; height: 19px; border: 1px solid #3f3f3f; border-top: 0; border-radius: 0 0 3px 3px; }
.wb { width: 27px; display: flex; justify-content: center; border-right: 1px solid #3f3f3f; }
.wb.wide { width: 47px; border: 0; }
.options { height: 34px; border-bottom: 1px solid #383838; display: flex; justify-content: flex-end; align-items: center; padding-right: 8px; }
.o-search { margin-left: 12px; }
.o-work { margin-left: 14px; }
.o-vee { margin-left: 10px; }
.o-share { margin-left: 11px; }
.work { flex: 1; min-height: 0; display: flex; }
.tools { width: 41px; border-left: 1px solid #3d3d3d; border-right: 3px solid #3f3f3f; }
.document { width: 1543px; display: flex; flex-direction: column; background: #282828; }
.doc-tabs { height: 29px; background: #434343; border-bottom: 1px solid #383838; }
.doc-body { flex: 1; display: flex; min-height: 0; }
.viewport { width: 1527px; position: relative; background: #282827; }
.scroll { width: 16px; background: #4a4a4a; }
.artboard { position: absolute; left: 958px; top: 126px; width: 148px; height: 683px; background: conic-gradient(#fff 25%, #ccc 0 50%, #fff 0 75%, #ccc 0) 0 0 / 16px 16px; }
.guide { position: absolute; top: 0; bottom: 1px; width: 1px; background: #4be3ef; }
.guide.thick { width: 2px; background: #379291; }
.g1 { left: 421px; } .g2 { left: 535px; } .g3 { left: 649px; } .g4 { left: 763px; } .g5 { left: 877px; } .g6 { left: 991px; } .g7 { left: 1104px; }
.doc-status { height: 16px; display: flex; background: #4a4a4a; align-items: center; font-size: 10.500px; letter-spacing: -.42px; word-spacing: .6px; }
.pct { width: 18px; background: #434544; height: 16px; line-height: 16px; overflow: hidden; text-indent: -1px; }
.eight { width: 30px; height: 14px; line-height: 14px; background: #535353; padding-left: 26px; overflow: hidden; border-right: 1px solid #434343; }
.dims { width: 166px; height: 16px; line-height: 16px; background: #535353; padding-left: 26px; }
.more { background: #535353; width: 18px; height: 16px; padding: 2px 6px; }
.dock { width: 40px; border-left: 2px solid #3b3b3b; display: flex; flex-direction: column; }
.dock-top { height: 12px; background: #434343; border-bottom: 1px solid #383838; display: flex; justify-content: flex-end; align-items: center; padding-right: 5px; }
.dgroup { display: flex; flex-direction: column; align-items: center; gap: 12px; border-bottom: 1px solid #383838; padding-top: 3px; }
.grip { width: 19px; height: 4px; margin-bottom: -4px; background: repeating-linear-gradient(90deg, #3d3d3d 0 1px, transparent 1px 2px); }
.h1 { height: 41px; gap: 10px; }
.h2 { height: 124px; gap: 15px; }
.h2 .grip { margin-bottom: -7px; }
.h3 { height: 70px; }
.h3 .grip { margin-bottom: -3px; }
.h4 { height: 97px; gap: 11px; }
.h5 { height: 41px; gap: 8px; }
.rest { flex: 1; border: 0; }
.glyph { font: italic 21px/20px "Liberation Serif", serif; color: #e2e2e2; }
.panel { flex: 1; border-left: 3px solid #3b3b3b; display: flex; flex-direction: column; }
.panel-top { height: 12px; background: #434343; border-bottom: 1px solid #383838; display: flex; justify-content: flex-end; align-items: center; padding-right: 6px; }
.ptabs { height: 28px; background: #434343; display: flex; font-weight: bold; color: #989898; letter-spacing: -.5px; }
.ptabs span { width: 59px; text-align: center; line-height: 26px; border-right: 1px solid #383838; border-bottom: 1px solid #383838; }
.ptabs .on { width: 48px; background: #535353; color: #f0f0f0; border-bottom: 0; }
.ptabs span:nth-child(3) { width: 44px; }
.burger { flex: 1; border-bottom: 1px solid #383838; background: repeating-linear-gradient(#b5b5b5 0 1px, transparent 1px 2px) no-repeat 126px 10px / 10px 7px; }
.prow { display: flex; align-items: center; border-bottom: 1px solid #434343; }
.filter { height: 32px; padding: 5px 0 0 3px; gap: 12px; }
.select { display: flex; align-items: center; height: 21px; border: 1px solid #666; border-radius: 3px; background: #454545; padding: 0 3px 0 8px; }
.select .v { margin-left: auto; }
.kind { width: 88px; gap: 4px; margin-right: -1px; }
.kind + svg + svg { margin-left: -1px; }
.toggle { width: 10px; height: 19px; border-radius: 5px; background: radial-gradient(circle at 5px 5px, #e2e2e2 4px, #3c3c3c 4.500px); margin-bottom: 3px; margin-left: -1px; }
.blend { height: 28px; padding-left: 3px; }
.mode { width: 130px; }
.lab { color: #c4c4c4; }
.blend .lab { width: 46px; padding-left: 6px; white-space: nowrap; }
.num { display: flex; width: 52px; height: 17px; border: 1px solid #666; border-radius: 3px; background: #454545; }
.num b { font-weight: normal; width: 35px; text-align: center; line-height: 15px; }
.num i { flex: 1; border-left: 1px solid #666; display: flex; align-items: center; justify-content: center; }
.blend .num, .lock .num { margin-top: -1px; }
.lock { height: 30px; padding: 0 0 1px 6px; border: 0; gap: 8px; }
.lock .lab { width: 25px; }
.l1 { margin-right: 1px; }
.l5 { margin-left: 2px; }
.lock .fill { width: 18px; margin-left: 14px; margin-right: -8px; white-space: nowrap; }
.list { flex: 1; background: linear-gradient(90deg, #4d4d4d 276px, #484848 276px); }
.layer { height: 25px; width: 276px; background: #535353; border-bottom: 2px solid #494949; display: flex; align-items: center; white-space: nowrap; color: #ececec; font-size: 10.700px; letter-spacing: -.64px; word-spacing: 1px; }
.tight { letter-spacing: -.78px; }
.vis { width: 31px; height: 100%; border-right: 2px solid #4a4a4a; display: flex; align-items: center; justify-content: center; margin-right: 3px; }
.vis svg { width: 14px; height: 10px; }
.vis i { width: 13px; height: 13px; border: 1px solid #4a4a4a; border-right-color: #696969; border-bottom-color: #696969; }
.d1 .vis { margin-right: 19px; }
.d2 .vis { margin-right: 35px; }
.tv { width: 9px; height: 6px; margin-right: 3px; }
.tr { width: 6px; height: 10px; margin-left: 1px; margin-right: 5px; }
.fo { width: 15px; height: 12px; margin-right: 11px; }
.sel { height: 41px; background: #6a6a6a; }
.sel .vis { background: #535353; margin-right: 49px; }
.lthumb { width: 36px; height: 36px; position: relative; display: grid; place-items: center; margin-right: 7px; }
.lthumb i { width: 32px; height: 32px; border: 1px solid #333; background: conic-gradient(#ccc 25%, #fff 0 50%, #ccc 0 75%, #fff 0) 0 0 / 8px 8px; }
.lthumb svg { position: absolute; left: 0; top: 0; }
.pfoot { height: 26px; background: #535353; border-top: 1px solid #383838; display: grid; grid-template-columns: repeat(7, 27px); align-items: center; justify-items: center; justify-content: end; padding: 0 19px 2px 0; }
.fx { font: italic 14px/14px "Open Sans", sans-serif; color: #dcdcdc; display: flex; align-items: flex-end; }

/* File manager window */
.explorer { position: absolute; left: 8px; top: 0; width: 1065px; height: 920px; background: #202020; color: #fff; display: flex; flex-direction: column; letter-spacing: -.35px; word-spacing: .5px; box-shadow: 0 8px 14px rgba(0,0,0,.35); border-top: 1px solid #4c4c4c; border-right: 1px solid #444; }
.x-title { height: 30px; background: #000; display: flex; align-items: flex-start; }
.q1 { margin: 6px 5px 0 9px; } .q2 { margin: 7px 7px 0 9px; } .q3 { margin: 7px 7px 0 0; } .q4 { margin: 12px 7px 0 0; }
.qsep { width: 3px; height: 13px; margin-top: 8px; border: 1px solid #4a4a4a; border-width: 0 1px; }
.manage { margin-left: 126px; margin-top: 3px; width: 95px; height: 27px; background: #eded81; color: #222; text-align: center; line-height: 28px; }
.x-name { margin: 7px 0 0 13px; letter-spacing: -.4px; word-spacing: .8px; }
.x-ctl { margin: 9px 17px 0 auto; display: flex; gap: 36px; }
.x-tabs { height: 23px; background: #000; display: flex; text-align: center; line-height: 23px; }
.file { width: 56px; background: #be4b00; color: #111; }
.home { width: 57px; background: #202020; border: 1px solid #333; border-bottom: 0; margin-left: 1px; line-height: 22px; }
.share { width: 59px; } .view { width: 53px; }
.pict { width: 95px; margin-left: 3px; padding-right: 2px; border: 1px solid #1d1d1d; border-width: 0 1px; }
.x-help { margin-left: auto; padding-right: 3px; display: flex; gap: 9px; align-items: center; }
.x-help b { width: 15px; height: 15px; border-radius: 50%; background: #0f6fd8; line-height: 15px; font-size: 12px; }
.ribbon { height: 93px; border-top: 1px solid #323232; border-bottom: 1px solid #303030; background: #202020; display: flex; }
.grp { display: flex; flex-direction: column; border-right: 1px solid #333; height: 88px; margin-top: 2px; }
.gb { display: flex; height: 73px; }
.grp p { text-align: center; color: #c8c8c8; line-height: 16px; }
.clip { width: 263px; padding-left: 6px; } .orga { width: 191px; padding-left: 4px; } .newg { width: 145px; padding-left: 4px; } .open { width: 133px; padding-left: 6px; } .selg { width: 115px; }
.clip p, .open p { margin-left: -6px; }
.orga p { margin-left: -5px; }
.newg p { margin-left: -5px; }
.big { display: flex; flex-direction: column; align-items: center; padding-top: 4px; }
.big span { text-align: center; line-height: 13px; margin-top: 6px; white-space: nowrap; }
.dim { color: #a9a9a9; }
.i32 { width: 28px; height: 31px; }
.w66 { width: 66px; } .w42 { width: 42px; } .w43 { width: 43px; } .w46 { width: 46px; } .w39 { width: 39px; } .w52 { width: 52px; }
.dn { width: 6px; height: 4px; display: inline-block; vertical-align: 2px; }
.vr { width: 1px; height: 55px; background: #4a4a4a; margin: 7px 0 0 4px; }
.small { margin-left: 3px; padding-top: 1px; white-space: nowrap; letter-spacing: -.45px; word-spacing: .8px; }
.small > div { height: 22px; display: flex; align-items: center; gap: 3px; }
.small > div > svg:first-child { width: 16px; height: 16px; }
.small .dn { margin-left: 1px; }
.s2 { margin-left: 6px; } .s3 { margin-left: 6px; } .s4 { margin-left: 7px; }
.addr { height: 41px; background: #191919; display: flex; align-items: center; padding: 4px 12px 5px 12px; }
.a2 { margin-left: 18px; } .a3 { margin-left: 13px; } .a4 { margin: 0 8px 0 10px; }
.addr .path { width: 592px; height: 31px; border: 1px solid #535353; display: flex; align-items: center; margin-left: auto; white-space: nowrap; letter-spacing: -.42px; word-spacing: .8px; padding-bottom: 1px; }
.pf { margin: 0 5px 0 3px; } .ll { margin-right: 7px; }
.cr { width: 5px; height: 8px; margin: 0 10px 0 8px; }
.pv { margin-left: auto; } .pr { margin: 0 9px 0 20px; }
.find { width: 342px; height: 31px; border: 1px solid #535353; margin-left: 12px; display: flex; align-items: center; color: #7c7c7c; padding: 0 0 1px 14px; gap: 13px; }
.x-main { flex: 1; display: flex; min-height: 0; }
.side { width: 212px; background: #191919; border-right: 2px solid #2a2a2a; padding-top: 16px; }
.it { height: 24px; display: flex; align-items: center; padding-left: 24px; gap: 5px; white-space: nowrap; letter-spacing: -.32px; word-spacing: .8px; }
.it.long { letter-spacing: -.46px; }
.it > svg { width: 16px; height: 16px; }
.it.c { padding-left: 32px; }
.it.g { margin-top: 8px; }
.it .pn { width: 11px; height: 11px; margin-left: auto; margin-right: 4px; }
.cur { background: linear-gradient(#333, #333) no-repeat 1px 2px / 207px 22px; }
.files { flex: 1; display: grid; grid-template-columns: repeat(7, 105px); grid-auto-rows: 131px; gap: 1px 14px; padding: 7px 0 0 15px; align-content: start; }
.tile { position: relative; background: #616161; border: 1px solid #3e3e3e; padding: 3px 0 0 5px; height: 131px; }
.plain { background: none; border-color: transparent; }
.hot { background: #75787a; }
.th { width: 90px; height: 90px; box-shadow: 1px 1px 2px rgba(0,0,0,.3); }
.th svg { width: 90px; height: 90px; }
.plain .th { box-shadow: none; }
.black { background: #000; }
.bd { position: absolute; left: 3px; top: 75px; width: 22px; height: 22px; }
.tile p { text-align: center; line-height: 15px; margin: 4px 0 0 -5px; white-space: nowrap; letter-spacing: -.2px; }
.x-status { height: 23px; background: #333; display: flex; align-items: center; padding-left: 14px; color: #e6e6e6; }
.x-status i { width: 1px; height: 11px; background: #eee; }
.s-a { width: 54px; } .s-b { width: 90px; margin-left: 10px; } .s-c { width: 52px; }
.vlist { margin-left: auto; margin-right: 3px; }
.vbig { width: 22px; height: 23px; border: 1px solid #8a8a8a; background: #666; display: grid; place-items: center; margin-right: 4px; }
.cursor { position: absolute; left: 447px; top: 265px; }
```
